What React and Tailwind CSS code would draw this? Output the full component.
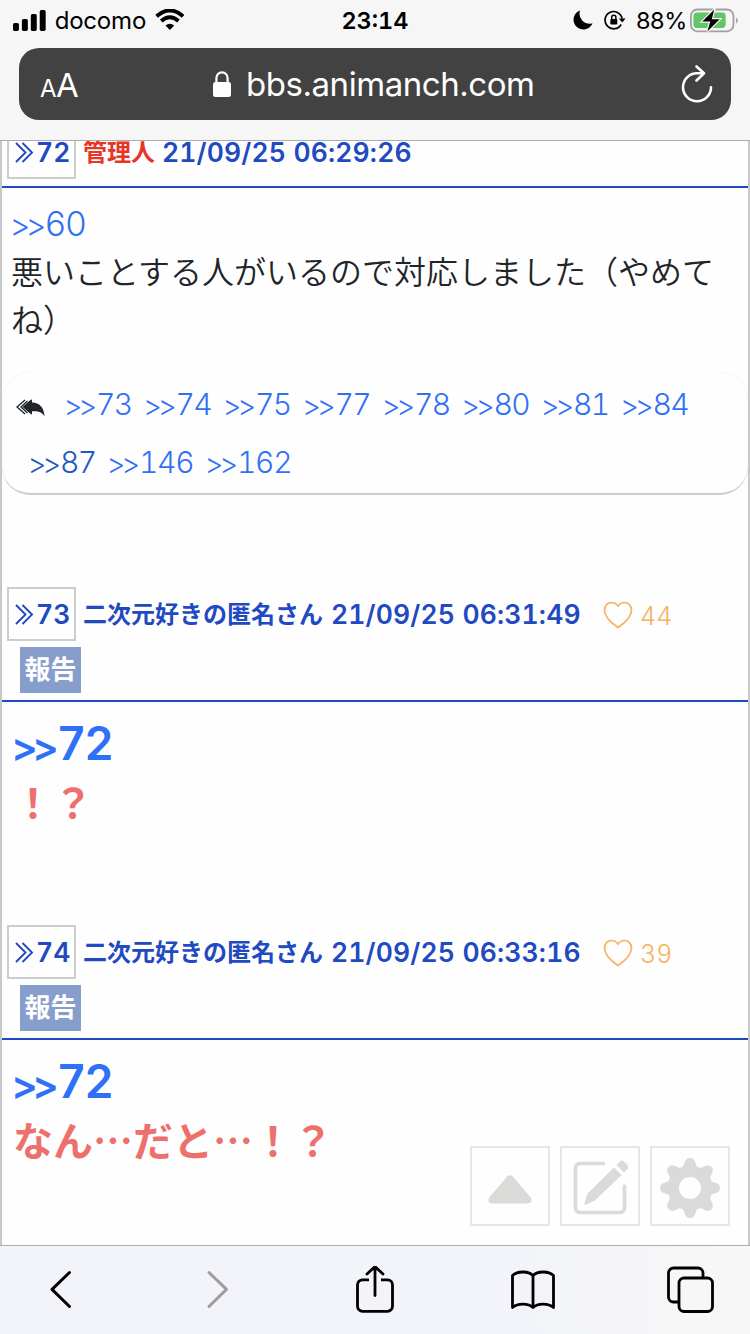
function Quote({ n, className = '', numClass = '' }) {
  return (
    <a className={`whitespace-nowrap font-['Inter',sans-serif] ${className}`}>
      <span className="relative top-[0.04em] inline-block -tracking-[0.15em] mr-[0.11em] -ml-[0.05em]">&gt;&gt;</span>
      <span className={numClass}>{n}</span>
    </a>
  );
}

function StatusBar() {
  return (
    <div className="flex h-10 items-center pl-[13px] pr-[11px] text-black">
      <svg width="33" height="21" viewBox="0 0 33 21" fill="currentColor">
        <rect x="0" y="13" width="6" height="8" rx="1.6" />
        <rect x="9" y="9" width="6" height="12" rx="1.6" />
        <rect x="18" y="4" width="6" height="17" rx="1.6" />
        <rect x="27" y="0" width="6" height="21" rx="1.6" />
      </svg>
      <span className="ml-[9px] w-[91px] pt-px text-[24px] leading-[40px] -tracking-[0.2px] whitespace-nowrap">docomo</span>
      <svg className="ml-[9px]" width="30" height="22" viewBox="0 0 30 22" fill="none" stroke="currentColor">
        <path d="M1.6 7.2Q15-4.4 28.400 7.200" strokeWidth="4" />
        <path d="M6.300 12Q15 4.500 23.700 12" strokeWidth="4" />
        <path d="M10.600 16.600Q15 12.800 19.400 16.600L15 21Z" fill="currentColor" stroke="none" />
      </svg>
      <span className="ml-[157px] w-[66px] pt-px text-[23.500px] leading-[40px] font-semibold tabular-nums whitespace-nowrap">23:14</span>
      <svg className="ml-[166px]" width="20" height="20" viewBox="0 0 20 20" fill="currentColor">
        <path d="M7.200 0.300A9.900 9.900 0 1 0 19.700 13.200A10 10 0 0 1 7.200 0.300Z" />
      </svg>
      <svg className="ml-[11px]" width="22" height="20" viewBox="0 0 22 20" fill="none" stroke="currentColor" strokeWidth="1.700">
        <path d="M18.300 8.500A8.700 8.700 0 1 0 17.300 14.500" />
        <path d="M15 8.400h6.800l-3.400 4z" fill="currentColor" stroke="none" />
        <rect x="6.400" y="9" width="7" height="5.600" rx="0.800" fill="currentColor" stroke="none" />
        <path d="M7.800 9.500V7.300a2.100 2.100 0 0 1 4.200 0V9.500" strokeWidth="1.500" />
      </svg>
      <span className="ml-[10px] w-[52px] pt-px text-[23.500px] leading-[40px] -tracking-[0.4px] whitespace-nowrap">88%</span>
      <svg className="ml-[3px]" width="49" height="25" viewBox="0 0 49 25">
        <rect x="0.900" y="1.400" width="43" height="22" rx="6.500" fill="none" stroke="#a0a0a0" strokeWidth="1.800" />
        <path d="M46.500 9.500q1.700 1 1.700 3t-1.700 3z" fill="#a0a0a0" />
        <rect x="3.500" y="4.500" width="32.500" height="15.500" rx="3.500" fill="#65c466" />
        <path d="M24.500 1.500L12.500 13.600h8L17.500 23.500L30 11.200h-8z" fill="#000" stroke="#f6f6f6" strokeWidth="2.400" paintOrder="stroke" />
      </svg>
    </div>
  );
}

function AddressBar() {
  return (
    <div className="mx-[19px] mt-2 flex h-[72px] items-center rounded-[20px] bg-[#424242] text-white">
      <div className="ml-[21px] mt-[2px] flex w-[41px] items-baseline leading-none">
        <span className="w-[16px] text-[24px] -tracking-[1px]">A</span>
        <span className="text-[33px]">A</span>
      </div>
      <svg className="ml-[132px]" width="18" height="27" viewBox="0 0 18 27">
        <rect x="0" y="11" width="18" height="15" rx="2.500" fill="currentColor" />
        <path d="M3.400 12V7a5.600 5.600 0 0 1 11.200 0v5" fill="none" stroke="currentColor" strokeWidth="2.200" />
      </svg>
      <span className="ml-[15px] mt-[2px] w-[288px] text-[33px] -tracking-[0.45px] whitespace-nowrap">bbs.animanch.com</span>
      <svg className="ml-[147px]" width="32" height="38" viewBox="0 0 32 38" fill="none" stroke="currentColor" strokeWidth="2.600" strokeLinecap="round" strokeLinejoin="round">
        <path d="M22 8.200H16A14 14 0 1 0 30 22.200" />
        <path d="M15.500 1.500L23 8.200L15.500 15.500" />
      </svg>
    </div>
  );
}

function PostNumber({ n }) {
  return (
    <div className="flex h-[54px] w-[69px] shrink-0 items-center border-2 border-[#ccc] pl-[6px] text-[26.500px] leading-none font-semibold">
      <svg width="19" height="21" viewBox="0 0 19 21" fill="none" stroke="currentColor" strokeWidth="1.900">
        <path d="M1 1l9.500 9.500L1 20" />
        <path d="M7.500 1L17 10.500L7.500 20" />
      </svg>
      <span className="ml-[2px] whitespace-nowrap tabular-nums">{n}</span>
    </div>
  );
}

function PostHeader({ n, name, date, likes }) {
  return (
    <header className="border-b-2 border-[#2149c1] pl-[5px] pb-[7px] text-[#2149c1]">
      <div className="flex items-center">
        <PostNumber n={n} />
        {likes ? (
          <span className="ml-[7px] w-[248px] pt-[2px] text-[24px] leading-none font-bold whitespace-nowrap">{name}</span>
        ) : (
          <span className="ml-[7px] w-[79px] pt-[2px] text-[24px] leading-none font-bold whitespace-nowrap text-[#e93323]">{name}</span>
        )}
        <span className="w-[252px] text-[26.500px] leading-none font-semibold tracking-[0.150px] tabular-nums whitespace-nowrap">{date}</span>
        {likes && (
          <div className="ml-[20px] flex items-center pt-px text-[#f6b260]">
            <svg width="30" height="28" viewBox="0 0 30 28" fill="none" stroke="currentColor" strokeWidth="1.700">
              <path d="M15 26.500C12 24.500 1.500 17.500 1.500 9C1.500 4.500 4.700 1.500 8.400 1.500C11.500 1.500 13.500 2.800 15 5C16.500 2.800 18.500 1.500 21.600 1.500C25.300 1.500 28.500 4.500 28.500 9C28.500 17.500 18 24.500 15 26.500Z" />
            </svg>
            <span className="ml-[7px] pt-[3px] text-[25px] leading-none font-light tabular-nums">{likes}</span>
          </div>
        )}
      </div>
      {likes && (
        <div className="mt-[6px] ml-[13px] h-[46px] w-[61px] bg-[#879dcc] text-center text-[26px] leading-[46px] font-bold text-white">報告</div>
      )}
    </header>
  );
}

function Post({ n, date, likes, children, className = '' }) {
  return (
    <article className={className}>
      <PostHeader n={n} name="二次元好きの匿名さん" date={date} likes={likes} />
      <div className="pt-[11px] pl-[11px] text-[40px] leading-[60px] font-bold text-[#ed706d]">
        <div className="h-[58px]">
          <Quote n="72" className="font-semibold text-[#3070f6]" numClass="ml-[1px] text-[46px]" />
        </div>
        <p className="font-['Noto_Sans_CJK_JP',sans-serif]">{children}</p>
      </div>
    </article>
  );
}

const replies = ['73', '74', '75', '77', '78', '80', '81', '84'];

function Replies() {
  return (
    <div className="mt-[30px] h-[123px] rounded-[28px] border-b-2 border-[#ccc] shadow-[inset_0_0_1px_#ddd] pt-[3px] text-[29px] leading-[58px] font-[350] text-[#3070f6]">
      <div className="flex h-[58px] items-center">
        <svg className="ml-[14px] mt-[7px] mr-[20px]" width="29" height="18" viewBox="0 0 29 18">
          <path d="M9 1L1 8L9 15M11.500 2L5 8L11.500 14" fill="none" stroke="#212529" strokeWidth="1.300" />
          <path d="M6.500 8L15 0.500Q16 0 16 1.500V3.500C23.500 3.500 28 8.500 28.500 17.500C25.500 12.500 22 12.300 16 12.300V14.500Q16 16 15 15.200Z" fill="#212529" />
        </svg>
        {replies.map((n) => (
          <Quote key={n} n={n} className="w-[79.500px]" numClass="tabular-nums text-[30px] -tracking-[1.5px]" />
        ))}
      </div>
      <div className="flex pl-[27px]">
        <Quote n="87" className="w-[79px] text-[#2457c5]" numClass="tabular-nums text-[30px] -tracking-[1.5px]" />
        <Quote n="146" className="w-[98px]" numClass="tabular-nums text-[30px] -tracking-[1.3px]" />
        <Quote n="162" numClass="tabular-nums text-[30px] -tracking-[1.3px]" />
      </div>
    </div>
  );
}

function FloatingButton({ children }) {
  return (
    <button className="flex h-20 w-20 items-center justify-center border-2 border-[#e6e6e5] bg-[#fefefe] text-[#dadad9]">
      {children}
    </button>
  );
}

const teeth = [0, 45, 90, 135, 180, 225, 270, 315];

function Gear() {
  return (
    <svg className="mt-[3px]" width="60" height="60" viewBox="-30 -30 60 60" fill="currentColor">
      {teeth.map((deg) => (
        <path
          key={deg}
          transform={`rotate(${deg})`}
          d="M-8.500-20.600C-6.900-21.300-6.300-22-5.600-24.700C-4.800-28-3.300-30 0-30C3.300-30 4.800-28 5.600-24.700C6.300-22 6.900-21.300 8.500-20.600L0 0Z"
        />
      ))}
      <circle r="22.200" />
      <circle r="11" fill="#fefefe" />
    </svg>
  );
}

function Toolbar() {
  return (
    <footer className="flex h-[89px] border-t border-[#acacae] bg-linear-to-r from-[#f3f4f9] from-70% to-[#f7f7f7] to-95% pt-[20px] pl-[49px] text-black">
      <svg width="23" height="46" viewBox="0 0 23 46" fill="none" stroke="currentColor" strokeWidth="3" strokeLinecap="round" strokeLinejoin="round">
        <path d="M20.500 6.500L3 23.400L20.500 40.500" />
      </svg>
      <svg className="ml-[134px] text-[#9e9ea1]" width="23" height="46" viewBox="0 0 23 46" fill="none" stroke="currentColor" strokeWidth="3" strokeLinecap="round" strokeLinejoin="round">
        <path d="M3 6.500L20.500 23.400L3 40.500" />
      </svg>
      <svg className="ml-[127px]" width="38" height="48" viewBox="0 0 38 48" fill="none" stroke="currentColor" strokeWidth="2.800" strokeLinejoin="round">
        <path d="M13 13.800H6.500a5 5 0 0 0-5 5v21.500a5 5 0 0 0 5 5h25a5 5 0 0 0 5-5V18.800a5 5 0 0 0-5-5h-6.500" />
        <path d="M19 0.600V29.500M11 8L19 0.600l8 7.400" strokeLinecap="round" />
      </svg>
      <svg className="ml-[117px]" width="46" height="46" viewBox="0 0 46 46" fill="none" stroke="currentColor" strokeWidth="2.800" strokeLinejoin="round">
        <path d="M22 9.500C17.500 4.800 6.500 4.800 1.500 9.500V41.500C6.500 37 17.500 37 22 41.500C26.500 37 37.500 37 42.500 41.500V9.500C37.500 4.800 26.500 4.800 22 9.500ZM22 9.500V41.500" />
      </svg>
      <svg className="ml-[110px]" width="48" height="48" viewBox="0 0 48 48" fill="none" stroke="currentColor" strokeWidth="2.800">
        <path d="M11 36H6.500a5 5 0 0 1-5-5V7a5 5 0 0 1 5-5h24.500a5 5 0 0 1 5 5V11.500" />
        <rect x="12" y="12" width="33.500" height="33.500" rx="5" />
      </svg>
    </footer>
  );
}

export default function App() {
  return (
    <div className="relative flex h-[1334px] w-[750px] flex-col overflow-hidden bg-[#fefefe] font-['Inter','Noto_Sans_CJK_JP',sans-serif]">
      <div className="h-[141px] shrink-0 border-b border-[#acacac] bg-[#f6f6f6]">
        <StatusBar />
        <AddressBar />
      </div>

      <main className="min-h-0 flex-1 overflow-hidden border-x-2 border-[#c8c8c8]">
        <article className="-mt-4">
          <PostHeader n="72" name="管理人" date="21/09/25 06:29:26" />
          <div className="pt-[12px] pl-[9px] text-[32px] leading-[48px] font-[350] text-[#212529]">
            <div className="h-[46px]">
              <Quote n="60" className="text-[#3070f6]" numClass="text-[34px]" />
            </div>
            <p className="w-[710px] font-['Noto_Sans_CJK_JP',sans-serif]">
              悪いことする人がいるので対応しました（やめて
              <br />
              ね）
            </p>
          </div>
          <Replies />
        </article>

        <Post className="mt-[92px]" n="73" date="21/09/25 06:31:49" likes="44">
          ！？
        </Post>
        <Post className="mt-[94px]" n="74" date="21/09/25 06:33:16" likes="39">
          なん…だと…！？
        </Post>
      </main>

      <Toolbar />

      {/* Floating page controls */}
      <div className="absolute right-5 bottom-[108px] flex gap-2.5">
        <FloatingButton>
          <svg className="mt-[7px]" width="44" height="29" viewBox="0 0 44 29" fill="currentColor">
            <path d="M19.200 1.500Q22-1 24.800 1.500L42.800 22.500Q45 28.500 39.500 28.500H4.500Q-1 28.500 1.200 22.500Z" />
          </svg>
        </FloatingButton>
        <FloatingButton>
          <svg className="mt-[2px]" width="56" height="56" viewBox="0 0 56 56" fill="none" stroke="currentColor">
            <path d="M31.500 4.500H8a4.500 4.500 0 0 0-4.500 4.500V49A4.500 4.500 0 0 0 8 53.500H48A4.500 4.500 0 0 0 52.500 49V27" strokeWidth="3.600" strokeLinecap="round" />
            <path d="M12.500 44.500L15.500 34.500L42 8.500L49.500 16L23 41.500L14 45.500Q12.500 46 12.500 44.500Z" fill="currentColor" stroke="none" />
            <path d="M44.500 6L48.500 2Q50 1 51.500 2L56 6.500Q57 8 56 9.500L52 13.500Z" fill="currentColor" stroke="none" />
          </svg>
        </FloatingButton>
        <FloatingButton>
          <Gear />
        </FloatingButton>
      </div>
    </div>
  );
}
